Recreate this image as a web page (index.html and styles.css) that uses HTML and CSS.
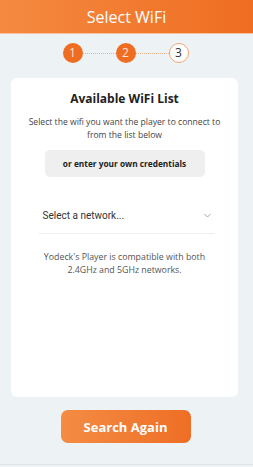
FILE: index.html
```html
<!DOCTYPE html>
<html>
<head>
<meta charset="utf-8">
<link rel="stylesheet" href="styles.css">
</head>
<body>
<div class="app">
  <header class="header">Select WiFi</header>
  <div class="stepper">
    <span class="step done">1</span>
    <span class="line"></span>
    <span class="step done">2</span>
    <span class="line"></span>
    <span class="step current">3</span>
  </div>
  <main class="card">
    <h1 class="title">Available WiFi List</h1>
    <p class="desc">Select the wifi you want the player to connect to from the list below</p>
    <button class="own">or enter your own credentials</button>
    <div class="select">
      <span class="placeholder">Select a network...</span>
      <svg class="chev" width="7" height="5" viewBox="0 0 7 5"><path d="M0.5 1 L3.5 4 L6.5 1" fill="none" stroke="#9aa0a6" stroke-width="0.9"/></svg>
    </div>
    <p class="note">Yodeck's Player is compatible with both 2.4GHz and 5GHz networks.</p>
  </main>
  <div class="actions">
    <button class="search">Search Again</button>
  </div>
</div>
</body>
</html>
```

FILE: styles.css
```css
* { box-sizing: border-box; }
html, body { margin: 0; padding: 0; }
body {
  background: #edf2f5;
  font-family: "Open Sans", "Noto Sans", sans-serif;
  width: 253px;
  height: 467px;
  overflow: hidden;
}
.app {
  height: 465px;
  display: flex;
  flex-direction: column;
  border-bottom: 1px solid #e0e5e8;
}
.header {
  height: 34px;
  background: linear-gradient(90deg, #f48a40 0%, #ef6d22 100%);
  border-bottom: 1px solid #f7c39c;
  color: #fff;
  font-size: 16px;
  display: flex;
  align-items: center;
  justify-content: center;
}
.stepper {
  margin-top: 9px;
  height: 20px;
  display: flex;
  align-items: center;
  justify-content: center;
  padding-right: 2px;
}
.step {
  width: 20px;
  height: 20px;
  border-radius: 50%;
  display: flex;
  align-items: center;
  justify-content: center;
  font-size: 12px;
  line-height: 1;
}
.step.done { background: #ef6d22; color: #fde4d2; }
.step.current { background: #fff; border: 1px solid #f3a472; color: #333; }
.line {
  width: 33px;
  height: 0;
  border-top: 1px dotted #f1b38a;
}
.card {
  margin: 15px 15px 0 11px;
  height: 319px;
  background: #fff;
  border-radius: 6px;
  display: flex;
  flex-direction: column;
  align-items: center;
  padding-top: 12px;
}
.title {
  margin: 0;
  font-size: 12px;
  font-weight: 700;
  color: #222;
  line-height: 17px;
}
.desc {
  margin: 9px 0 0;
  width: 205px;
  text-align: center;
  font-size: 8.6px;
  line-height: 13px;
  color: #444;
}
.own {
  margin-top: 8px;
  border: none;
  background: #efefef;
  border-radius: 5px;
  width: 160px;
  height: 27px;
  font-family: inherit;
  font-size: 8.3px;
  font-weight: 700;
  color: #222;
  padding: 0;
}
.select {
  margin-top: 27px;
  width: 176px;
  margin-left: 4px;
  height: 30px;
  border-bottom: 1px solid #eeeeee;
  display: flex;
  align-items: center;
  justify-content: space-between;
  padding: 0 4px 6px 4px;
}
.placeholder {
  font-family: Roboto, "Liberation Sans", sans-serif;
  font-size: 10px;
  color: #333;
}
.note {
  margin: 17px 0 0;
  width: 180px;
  text-align: center;
  font-size: 8.8px;
  line-height: 13px;
  color: #555;
}
.actions {
  display: flex;
  justify-content: center;
  margin-top: 13px;
  padding-right: 2px;
}
.search {
  width: 130px;
  height: 33px;
  border: none;
  border-radius: 7px;
  background: linear-gradient(90deg, #f48c44 0%, #ef6e25 100%);
  color: #fff;
  font-family: inherit;
  font-size: 13px;
  font-weight: 700;
  padding: 0;
}
```
